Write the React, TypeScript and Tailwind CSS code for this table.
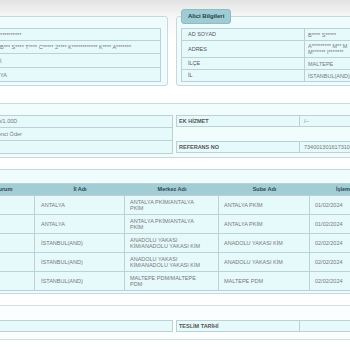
import type { ReactNode } from "react"

const font = "font-['Liberation_Sans',Arial,'Noto_Sans',sans-serif]"

type KV = { label: string; value: ReactNode; h: string }

function InfoTable({ rows, labelW, className = "" }: { rows: KV[]; labelW: string; className?: string }) {
  return (
    <div className={`border border-[#bcd1d4] bg-[#e6fafc] ${className}`}>
      {rows.map((r, i) => (
        <div
          key={i}
          className={`flex ${r.h} ${i < rows.length - 1 ? "border-b border-[#bcd1d4]" : ""}`}
        >
          <div className={`${labelW} shrink-0 border-r border-[#bcd1d4] flex items-center pl-[6px] text-[#555]`}>
            {r.label}
          </div>
          <div className="flex-1 flex items-center pl-[3px] leading-[6px] whitespace-nowrap">{r.value}</div>
        </div>
      ))}
    </div>
  )
}

function Fieldset({ title, children, className = "" }: { title: string; children: ReactNode; className?: string }) {
  return (
    <fieldset className={`border border-[#c8d8db] rounded-[3px] bg-[#effcfd] px-[4px] pb-[3px] ${className}`}>
      <legend className="h-[15px] px-[6px] flex items-center rounded-[3px] border border-[#8fbcc4] bg-[#9fcbd2] text-[6px] font-bold text-[#203f4b]">
        {title}
      </legend>
      <div className="pt-[4px]">{children}</div>
    </fieldset>
  )
}

function Box({ label, value, className = "" }: { label: string; value: string; className?: string }) {
  return (
    <div className={`flex h-[12px] border border-[#bcd1d4] bg-[#e6fafc] ${className}`}>
      <div className="w-[123px] shrink-0 border-r border-[#bcd1d4] flex items-center pl-[2px] font-bold text-[#555]">
        {label}
      </div>
      <div className="flex-1 flex items-center pl-[4px] whitespace-nowrap">{value}</div>
    </div>
  )
}

const shipments = [
  { il: "ANTALYA", merkez: ["ANTALYA PKİM/ANTALYA", "PKİM"], sube: "ANTALYA PKİM", tarih: "01/02/2024" },
  { il: "ANTALYA", merkez: ["ANTALYA PKİM/ANTALYA", "PKİM"], sube: "ANTALYA PKİM", tarih: "01/02/2024" },
  { il: "İSTANBUL(AND)", merkez: ["ANADOLU YAKASI", "KİM/ANADOLU YAKASI KİM"], sube: "ANADOLU YAKASI KİM", tarih: "02/02/2024" },
  { il: "İSTANBUL(AND)", merkez: ["ANADOLU YAKASI", "KİM/ANADOLU YAKASI KİM"], sube: "ANADOLU YAKASI KİM", tarih: "02/02/2024" },
  { il: "İSTANBUL(AND)", merkez: ["MALTEPE PDM/MALTEPE", "PDM"], sube: "MALTEPE PDM", tarih: "02/02/2024" },
]

const cols = ["w-[63px]", "w-[90px]", "w-[94px]", "w-[91px]", "w-[82px]"]

export default function App() {
  return (
    <div
      className={`w-[350px] h-[350px] overflow-hidden bg-[linear-gradient(to_bottom,#e2e2e2,#f6f6f6_16px,#ffffff_40px)] ${font} text-[5.5px] text-[#777]`}
    >
      <div className="-ml-[120px] w-[600px] pt-[9px]">
        {/* Gönderici / Alıcı */}
        <div className="flex gap-[8px]">
          <Fieldset title="Gönderici Bilgileri" className="w-[288px] pr-[6px]">
            <InfoTable
              labelW="w-[111px]"
              rows={[
                { label: "AD SOYAD", value: "**********", h: "h-[12px]" },
                { label: "ADRES", value: "B*** S**** T**** C***** 2**** K************ K**** A*******", h: "h-[13px]" },
                { label: "İLÇE", value: "İ", h: "h-[14px]" },
                { label: "İL", value: "YA", h: "h-[13px]" },
              ]}
            />
          </Fieldset>
          <Fieldset title="Alici Bilgileri" className="w-[250px]">
            <InfoTable
              labelW="w-[123px]"
              rows={[
                { label: "AD SOYAD", value: "B**** S*****", h: "h-[12px]" },
                {
                  label: "ADRES",
                  value: (
                    <span>
                      A********* M** M<br />M****** I*******
                    </span>
                  ),
                  h: "h-[17px]",
                },
                { label: "İLÇE", value: "MALTEPE", h: "h-[12px]" },
                { label: "İL", value: "İSTANBUL(AND)", h: "h-[11px]" },
              ]}
            />
          </Fieldset>
        </div>

        {/* Gönderi bilgileri */}
        <div className="mt-[17px] border border-[#c8d8db] bg-[#f1fcfd] pt-[11px] pb-[3px] pl-[10px] flex gap-[3px]">
          <div className="w-[282px] border border-[#bcd1d4] bg-[#e6fafc]">
            {[
              { v: "n/1.00D", h: "h-[12px]" },
              { v: "enci Öder", h: "h-[13px]" },
              { v: "", h: "h-[12px]" },
            ].map((r, i) => (
              <div key={i} className={`flex ${r.h} ${i < 2 ? "border-b border-[#bcd1d4]" : ""}`}>
                <div className="w-[106px] shrink-0 border-r border-[#bcd1d4]" />
                <div className="flex-1 flex items-center whitespace-nowrap">{r.v}</div>
              </div>
            ))}
          </div>
          <div className="flex-1 flex flex-col">
            <Box label="EK HİZMET" value="/--" />
            <Box label="REFERANS NO" value="7340013016173100" className="mt-[14px]" />
          </div>
        </div>

        {/* Hareketler */}
        <div className="mt-[11px] border border-[#c8d8db] bg-[#eefcfd] pt-[13px] pb-[2px] pl-[90px]">
          <div className="border border-[#bcd1d4] w-[420px]">
            <div className="flex h-[11px] bg-[#a2cdd4] font-bold text-[#2c4955]">
              {["Durum", "İl Adı", "Merkez Adı", "Sube Adı", "İşlem Tarihi"].map((h, i) => (
                <div key={h} className={`${cols[i]} shrink-0 flex items-center justify-center`}>
                  {h}
                </div>
              ))}
            </div>
            {shipments.map((s, i) => (
              <div key={i} className="flex h-[19px] border-t border-[#bcd1d4] bg-[#e6fafc]">
                <div className={`${cols[0]} shrink-0 border-r border-[#bcd1d4]`} />
                <div className={`${cols[1]} shrink-0 border-r border-[#bcd1d4] flex items-center pl-[6px]`}>{s.il}</div>
                <div className={`${cols[2]} shrink-0 border-r border-[#bcd1d4] flex flex-col justify-center pl-[5px] leading-[6px]`}>
                  <span className="whitespace-nowrap">{s.merkez[0]}</span>
                  <span className="whitespace-nowrap">{s.merkez[1]}</span>
                </div>
                <div className={`${cols[3]} shrink-0 border-r border-[#bcd1d4] flex items-center pl-[5px]`}>{s.sube}</div>
                <div className={`${cols[4]} shrink-0 flex items-center pl-[5px]`}>{s.tarih}</div>
              </div>
            ))}
          </div>
        </div>

        {/* Teslim */}
        <div className="mt-[11px] border border-[#d3dfe1] bg-[#fbfefe] pt-[14px] pb-[7px] pl-[10px] flex gap-[3px]">
          <div className="w-[282px] h-[12px] border border-[#bcd1d4] bg-[#e6fafc] flex">
            <div className="w-[106px] shrink-0 border-r border-[#bcd1d4]" />
          </div>
          <div className="flex-1">
            <Box label="TESLİM TARİHİ" value="" />
          </div>
        </div>
      </div>
    </div>
  )
}
